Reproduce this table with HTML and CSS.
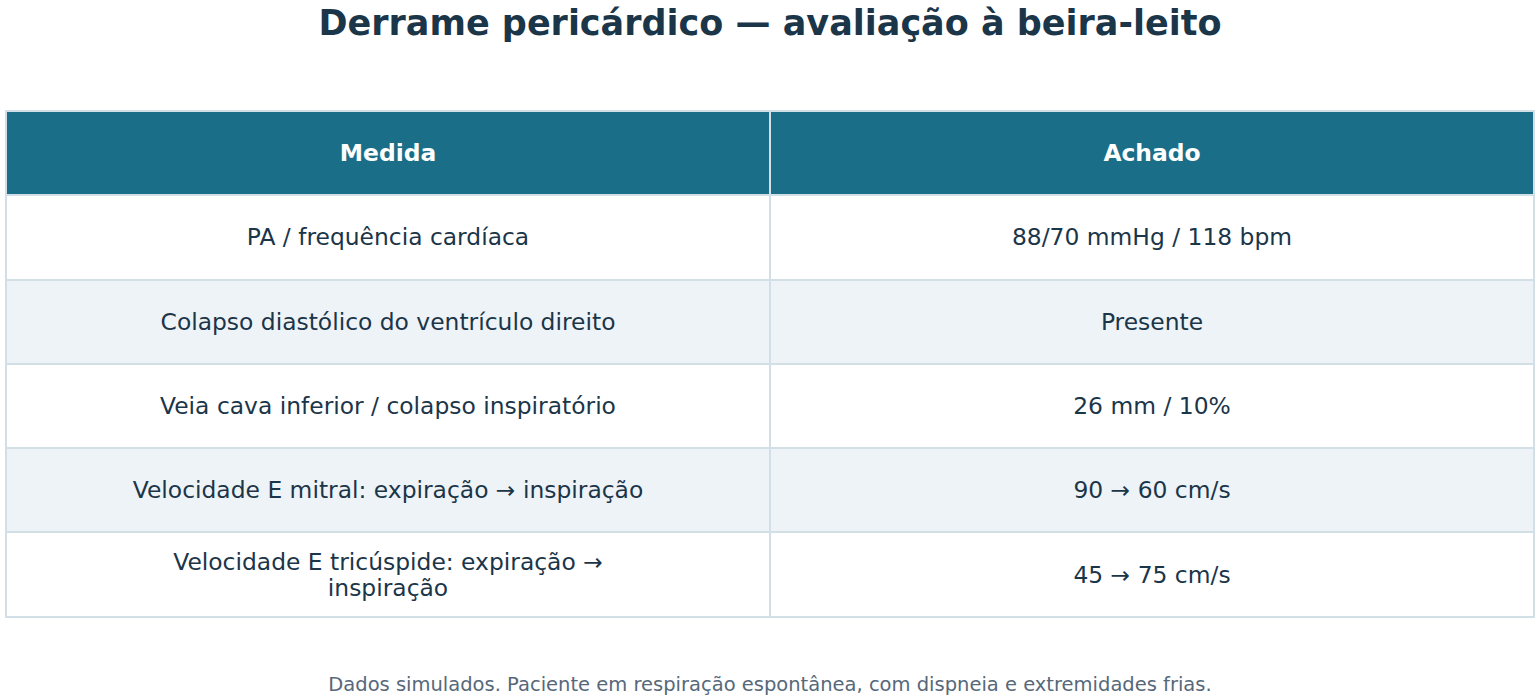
FILE: index.html
```html
<!DOCTYPE html>
<html lang="pt">
<head>
<meta charset="utf-8">
<title>Derrame pericárdico</title>
<link rel="stylesheet" href="styles.css">
</head>
<body>
<div class="page">
  <h1 class="title">Derrame pericárdico — avaliação à beira-leito</h1>
  <table class="data">
    <thead>
      <tr><th>Medida</th><th>Achado</th></tr>
    </thead>
    <tbody>
      <tr><td><div class="cell">PA / frequência cardíaca</div></td><td><div class="cell">88/70 mmHg / 118 bpm</div></td></tr>
      <tr class="alt"><td><div class="cell">Colapso diastólico do ventrículo direito</div></td><td><div class="cell">Presente</div></td></tr>
      <tr><td><div class="cell">Veia cava inferior / colapso inspiratório</div></td><td><div class="cell">26 mm / 10%</div></td></tr>
      <tr class="alt"><td><div class="cell">Velocidade E mitral: expiração → inspiração</div></td><td><div class="cell">90 → 60 cm/s</div></td></tr>
      <tr><td><div class="cell">Velocidade E tricúspide: expiração → inspiração</div></td><td><div class="cell">45 → 75 cm/s</div></td></tr>
    </tbody>
  </table>
  <p class="note">Dados simulados. Paciente em respiração espontânea, com dispneia e extremidades frias.</p>
</div>
</body>
</html>
```
FILE: styles.css
```css
html, body {
  margin: 0;
  padding: 0;
  background: #ffffff;
}
body {
  font-family: "DejaVu Sans", sans-serif;
  color: #1b3549;
}
.page {
  width: 1540px;
  height: 700px;
  overflow: hidden;
}
.title {
  margin: 0;
  padding-top: 3px;
  height: 110px;
  box-sizing: border-box;
  text-align: center;
  font-size: 35px;
  font-weight: bold;
  line-height: 40px;
  color: #1b3549;
}
.data {
  margin-left: 5px;
  width: 1530px;
  border-collapse: collapse;
  table-layout: fixed;
}
.data th, .data td {
  border: 2px solid #d3dfe7;
  text-align: center;
  vertical-align: middle;
  padding: 0;
  height: 82.3px;
}
.data th {
  background: #1a6e87;
  color: #ffffff;
  font-size: 23.4px;
  font-weight: bold;
}
.data td {
  font-size: 23.4px;
  line-height: 26px;
  background: #ffffff;
}
.data tr.alt td {
  background: #eef3f7;
}
.cell {
  max-width: 535px;
  margin: 0 auto;
}
.note {
  margin: 55px 0 0;
  text-align: center;
  font-size: 19.5px;
  color: #56687a;
}
```
